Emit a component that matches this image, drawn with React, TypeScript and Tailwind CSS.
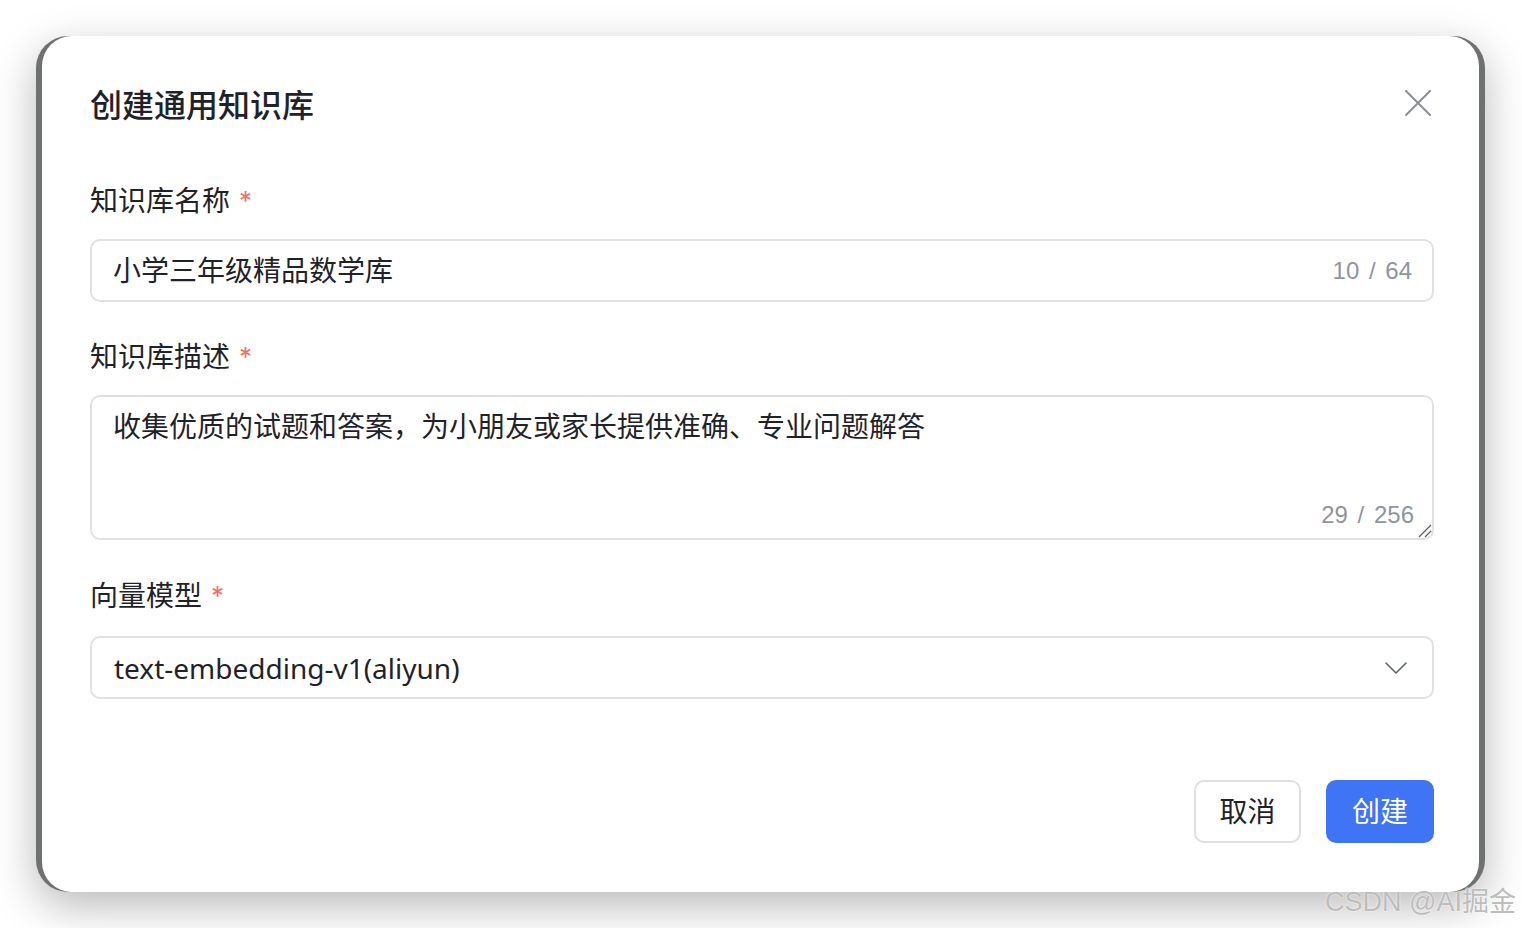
const cjk = { fontFamily: '"Inter", "Noto Sans CJK SC", sans-serif' };
const num = { fontFamily: '"Liberation Sans", "Noto Sans", sans-serif' };

function Label({ text }: { text: string }) {
  return (
    <div className="flex h-[40px] items-center text-[28px] leading-[40px] text-[#1f2329]">
      <span>{text}</span>
      <span className="ml-[9px] text-[26px] text-[#f0716a]">*</span>
    </div>
  );
}

export default function App() {
  return (
    <div className="relative h-[928px] w-[1522px] overflow-hidden bg-white pl-[36px] pt-[36px]" style={cjk}>
      <div className="flex h-[856px] w-[1449px] overflow-hidden rounded-[32px] bg-[#6f7070] shadow-[0_14px_44px_rgba(0,0,0,0.28)]">
        <div className="mx-[6px] flex flex-1 flex-col rounded-[30px] bg-white pl-[48px] pr-[45px] pt-[48px]">
          <div className="flex h-[44px] items-center justify-between">
            <h1 className="text-[32px] font-medium leading-[44px] text-[#1f2329]">创建通用知识库</h1>
            <svg className="-mt-[6px] mr-[3px] h-[26px] w-[26px]" viewBox="0 0 26 26" fill="none">
              <path d="M1 1 L25 25 M25 1 L1 25" stroke="#8a8f99" strokeWidth="2" strokeLinecap="round" />
            </svg>
          </div>

          <div className="mt-[53px]">
            <Label text="知识库名称" />
          </div>
          <div className="mt-[18px] flex h-[63px] items-center rounded-[10px] border-2 border-[#e0e1e4] pl-[21px] pr-[20px]">
            <span className="flex-1 text-[28px] text-[#1f2329]">小学三年级精品数学库</span>
            <span className="text-[24px] text-[#8f959e]" style={num}>
              10 <span className="mx-[3px]">/</span> 64
            </span>
          </div>

          <div className="mt-[35px]">
            <Label text="知识库描述" />
          </div>
          <div className="relative mt-[18px] h-[145px] rounded-[10px] border-2 border-[#e0e1e4] pl-[21px] pr-[19px] pt-[10px]">
            <div className="text-[28px] leading-[40px] text-[#1f2329]">
              收集优质的试题和答案，为小朋友或家长提供准确、专业问题解答
            </div>
            <span className="absolute bottom-[8px] right-[18px] text-[24px] leading-[30px] text-[#8f959e]" style={num}>
              29 <span className="mx-[3px]">/</span> 256
            </span>
            <svg className="absolute bottom-[0px] right-[0px] h-[16px] w-[16px]" viewBox="0 0 16 16">
              <path d="M15 3 L3 15 M15 9 L9 15" stroke="#5c5f66" strokeWidth="1.3" />
            </svg>
          </div>

          <div className="mt-[36px]">
            <Label text="向量模型" />
          </div>
          <div className="mt-[20px] flex h-[63px] items-center rounded-[10px] border-2 border-[#e0e1e4] pl-[22px] pr-[25px]">
            <span className="flex-1 text-[28px] text-[#1f2329]" style={{ fontFamily: '"Noto Sans", "Noto Sans CJK SC", sans-serif' }}>
              text-embedding-v1(aliyun)
            </span>
            <svg className="h-[12px] w-[22px]" viewBox="0 0 22 12" fill="none">
              <path d="M1 1 L11 11 L21 1" stroke="#5f6570" strokeWidth="1.6" strokeLinecap="round" strokeLinejoin="round" />
            </svg>
          </div>

          <div className="mt-[81px] flex justify-end gap-[25px]">
            <button className="flex h-[63px] w-[107px] items-center justify-center rounded-[10px] border-2 border-[#dedfe2] bg-white text-[28px] text-[#1f2329]">
              取消
            </button>
            <button className="flex h-[63px] w-[108px] items-center justify-center rounded-[10px] bg-[#3f74f5] text-[28px] text-white">
              创建
            </button>
          </div>
        </div>
      </div>

      <div
        className="absolute left-[1325px] top-[884px] text-[27px] leading-[36px] text-[#bdbdbd] [text-shadow:0_0_2px_#ffffff]"
        style={{ fontFamily: '"Liberation Sans", "Noto Sans CJK SC", sans-serif' }}
      >
        CSDN @AI掘金
      </div>
    </div>
  );
}
